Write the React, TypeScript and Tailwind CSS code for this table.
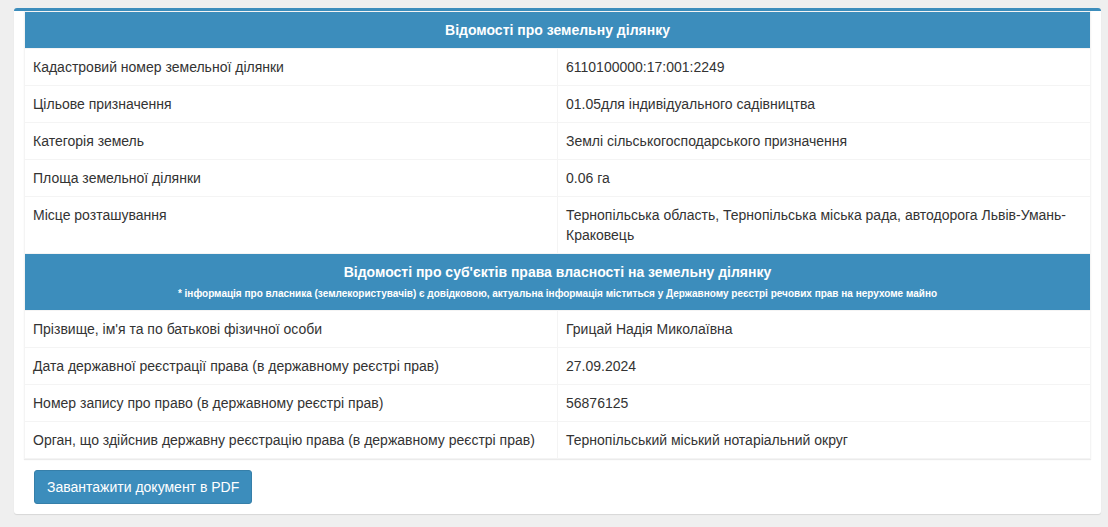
import React from 'react';

type Row = { label: string; value: string };

const landRows: Row[] = [
  { label: 'Кадастровий номер земельної ділянки', value: '6110100000:17:001:2249' },
  { label: 'Цільове призначення', value: '01.05для індивідуального садівництва' },
  { label: 'Категорія земель', value: 'Землі сільськогосподарського призначення' },
  { label: 'Площа земельної ділянки', value: '0.06 га' },
  {
    label: 'Місце розташування',
    value: 'Тернопільська область, Тернопільська міська рада, автодорога Львів-Умань-Краковець'
  }
];

const ownerRows: Row[] = [
  { label: "Прізвище, ім'я та по батькові фізичної особи", value: 'Грицай Надія Миколаївна' },
  { label: 'Дата державної реєстрації права (в державному реєстрі прав)', value: '27.09.2024' },
  { label: 'Номер запису про право (в державному реєстрі прав)', value: '56876125' },
  {
    label: 'Орган, що здійснив державну реєстрацію права (в державному реєстрі прав)',
    value: 'Тернопільський міський нотаріальний округ'
  }
];

const cell = 'border border-[#f4f4f4] px-2 py-2 align-top leading-5';

const DataRows: React.FC<{ rows: Row[] }> = ({ rows }) => (
  <>
    {rows.map((r) => (
      <tr key={r.label}>
        <td className={cell}>{r.label}</td>
        <td className={cell}>{r.value}</td>
      </tr>
    ))}
  </>
);

const App: React.FC = () => {
  return (
    <div
      className="min-h-[527px] bg-[#efefef] pt-2 pl-[14px] pr-[7px] text-[14px] text-[#333]"
      style={{ fontFamily: '"Liberation Sans", Arial, sans-serif' }}
    >
      <div className="rounded-[3px] border-t-[3px] border-[#3c8dbc] bg-white px-[10px] pb-[10px] shadow-[0_1px_1px_rgba(0,0,0,0.1)]">
        <table className="w-full table-fixed border-collapse border border-[#f4f4f4] shadow-[0_1px_1px_rgba(0,0,0,0.08)]">
          <tbody>
            <tr>
              <th colSpan={2} className="border border-[#f4f4f4] bg-[#3c8dbc] px-2 py-2 text-center font-bold leading-5 text-white">
                Відомості про земельну ділянку
              </th>
            </tr>
            <DataRows rows={landRows} />
            <tr>
              <th colSpan={2} className="border border-[#f4f4f4] bg-[#3c8dbc] px-2 pt-2 pb-[7px] text-center font-bold leading-5 text-white">
                Відомості про суб'єктів права власності на земельну ділянку
                <span className="mt-[2px] block text-[10px] leading-[19px]">
                  * інформація про власника (землекористувачів) є довідковою, актуальна інформація міститься у Державному реєстрі речових прав на нерухоме майно
                </span>
              </th>
            </tr>
            <DataRows rows={ownerRows} />
          </tbody>
        </table>
        <div className="mt-[11px] pl-[10px]">
          <button
            type="button"
            className="h-[34px] rounded-[3px] border border-[#367fa9] bg-[#3c8dbc] px-3 text-[14px] leading-5 text-white"
          >
            Завантажити документ в PDF
          </button>
        </div>
      </div>
    </div>
  );
};

export default App;
